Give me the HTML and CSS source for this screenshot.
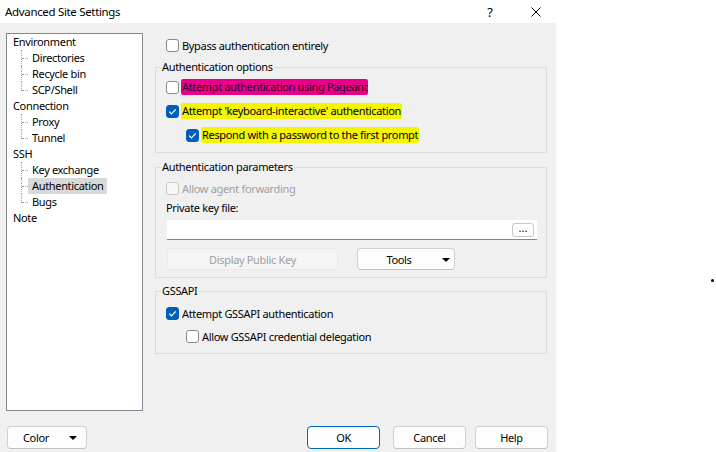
FILE: index.html
```html
<!DOCTYPE html>
<html lang="en">
<head>
    <meta charset="UTF-8">
    <title>Advanced Site Settings</title>
    <link rel="stylesheet" href="styles.css">
</head>
<body>

<div class="screen">
    <div class="dialog">
        <div class="titlebar">
            <span class="title">Advanced Site Settings</span>
            <span class="cap-help">?</span>
            <span class="cap-close">
                <svg width="10" height="10" viewBox="0 0 10 10"><path d="M0.5 0.5 L9.5 9.5 M9.5 0.5 L0.5 9.5" stroke="#000" stroke-width="1" fill="none"/></svg>
            </span>
        </div>

        <div class="client">
            <div class="main">
                <div class="tree">
                    <div class="node"><span>Environment</span></div>
                    <div class="leaf"><span>Directories</span></div>
                    <div class="leaf"><span>Recycle bin</span></div>
                    <div class="leaf last"><span>SCP/Shell</span></div>
                    <div class="node"><span>Connection</span></div>
                    <div class="leaf"><span>Proxy</span></div>
                    <div class="leaf last"><span>Tunnel</span></div>
                    <div class="node"><span>SSH</span></div>
                    <div class="leaf"><span>Key exchange</span></div>
                    <div class="leaf selected"><span>Authentication</span></div>
                    <div class="leaf last"><span>Bugs</span></div>
                    <div class="node"><span>Note</span></div>
                </div>

                <div class="pane">
                    <div class="check-row top">
                        <span class="box"></span>
                        <span>Bypass authentication entirely</span>
                    </div>

                    <fieldset class="group">
                        <legend>Authentication options</legend>
                        <div class="check-row">
                            <span class="box"></span>
                            <span class="mark pink">Attempt authentication using Pageant</span>
                        </div>
                        <div class="check-row">
                            <span class="box on"><svg width="11" height="11" viewBox="0 0 11 11"><path d="M2.2 5.7 L4.4 7.9 L8.8 3.3" stroke="#fff" stroke-width="1.2" fill="none"/></svg></span>
                            <span class="mark yellow">Attempt 'keyboard-interactive' authentication</span>
                        </div>
                        <div class="check-row sub">
                            <span class="box on"><svg width="11" height="11" viewBox="0 0 11 11"><path d="M2.2 5.7 L4.4 7.9 L8.8 3.3" stroke="#fff" stroke-width="1.2" fill="none"/></svg></span>
                            <span class="mark yellow">Respond with a password to the first prompt</span>
                        </div>
                    </fieldset>

                    <fieldset class="group params">
                        <legend>Authentication parameters</legend>
                        <div class="check-row disabled">
                            <span class="box"></span>
                            <span>Allow agent forwarding</span>
                        </div>
                        <div class="label">Private key file:</div>
                        <div class="keyfile">
                            <span class="browse">...</span>
                        </div>
                        <div class="key-buttons">
                            <span class="btn wide disabled">Display Public Key</span>
                            <span class="btn drop tools">Tools <i class="tri"></i></span>
                        </div>
                    </fieldset>

                    <fieldset class="group gss">
                        <legend>GSSAPI</legend>
                        <div class="check-row">
                            <span class="box on"><svg width="11" height="11" viewBox="0 0 11 11"><path d="M2.2 5.7 L4.4 7.9 L8.8 3.3" stroke="#fff" stroke-width="1.2" fill="none"/></svg></span>
                            <span>Attempt GSSAPI authentication</span>
                        </div>
                        <div class="check-row sub short">
                            <span class="box"></span>
                            <span>Allow GSSAPI credential delegation</span>
                        </div>
                    </fieldset>
                </div>
            </div>

            <div class="footer">
                <span class="btn drop color">Color <i class="tri"></i></span>
                <span class="spacer"></span>
                <span class="btn ok">OK</span>
                <span class="btn cancel">Cancel</span>
                <span class="btn help">Help</span>
            </div>
        </div>
    </div>

    <div class="outside">
        <span class="dot"></span>
    </div>
</div>

</body>
</html>
```

FILE: styles.css
```css
* {
    box-sizing: border-box;
}
body {
    margin: 0;
    background-color: #fff;
    font-family: "Noto Sans", sans-serif;
    font-size: 11px;
    letter-spacing: -0.33px;
    color: #000;
}
.screen {
    display: flex;
    width: 716px;
    height: 452px;
}
.dialog {
    width: 556px;
    height: 452px;
    display: flex;
    flex-direction: column;
}
.titlebar {
    height: 23px;
    display: flex;
    align-items: center;
    padding-left: 5px;
    background-color: #fff;
    font-size: 11.5px;
}
.title {
    flex: 1;
}
.cap-help {
    width: 52px;
    text-align: center;
    font-size: 13px;
}
.cap-close {
    width: 40px;
    display: flex;
    justify-content: center;
}
.client {
    flex: 1;
    display: flex;
    flex-direction: column;
    background-color: #f0f0f0;
    padding: 10px 9px 3px 6px;
}
.main {
    display: flex;
    gap: 12px;
    height: 378px;
}

/* tree */
.tree {
    width: 137px;
    background-color: #fff;
    border: 1px solid #828790;
}
.node, .leaf {
    position: relative;
    height: 16px;
    line-height: 16px;
    white-space: nowrap;
}
.node {
    padding-left: 3px;
}
.node span {
    padding: 0 3px;
}
.leaf {
    padding-left: 21px;
}
.leaf span {
    display: inline-block;
    height: 16px;
    padding: 0 4px;
}
.leaf.selected span {
    background-color: #d9d9d9;
    padding-right: 3px;
}
.leaf::before {
    content: "";
    position: absolute;
    left: 14px;
    top: 0;
    height: 16px;
    border-left: 1px dotted #a0a0a0;
}
.leaf.last::before {
    height: 9px;
}
.leaf::after {
    content: "";
    position: absolute;
    left: 15px;
    top: 8px;
    width: 6px;
    border-top: 1px dotted #a0a0a0;
}

/* right pane */
.pane {
    flex: 1;
}
.check-row {
    display: flex;
    align-items: center;
    height: 24px;
    white-space: nowrap;
}
.check-row.top {
    padding-left: 11px;
}
.check-row.sub {
    padding-left: 20px;
}
.check-row.short {
    height: 23px;
}
.box {
    width: 13px;
    height: 13px;
    flex: none;
    display: flex;
    align-items: center;
    justify-content: center;
    margin-right: 3px;
    border: 1px solid #8a8a8a;
    border-radius: 3px;
    background-color: #fff;
}
.box.on {
    border-color: #005fb8;
    background-color: #005fb8;
}
.check-row.disabled {
    color: #a0a0a0;
}
.check-row.disabled .box {
    border-color: #c8c8c8;
    background-color: #f7f7f7;
}
.mark {
    height: 16px;
    line-height: 16px;
    padding: 0 1px;
    margin-left: -1px;
    border-radius: 2px;
}
.pink {
    background-color: #e8008a;
    color: #2a0018;
}
.yellow {
    background-color: #f5f500;
}
.group {
    margin: 2px 0 0 0;
    padding: 0 9px 5px 10px;
    border: 1px solid #dcdcdc;
    min-width: 0;
}
.group legend {
    padding: 0 1px;
    margin-left: -5px;
    line-height: 16px;
}
.params {
    margin-top: 6px;
    padding-top: 1px;
    padding-bottom: 7px;
}
.gss {
    margin-top: 5px;
    padding-top: 2px;
}
.label {
    height: 16px;
    line-height: 16px;
}
.keyfile {
    height: 20px;
    margin: 4px 0 0 1px;
    display: flex;
    align-items: center;
    justify-content: flex-end;
    padding-right: 3px;
    background-color: #fff;
    border-bottom: 1px solid #868686;
}
.browse {
    width: 22px;
    height: 14px;
    line-height: 8px;
    text-align: center;
    font-size: 11px;
    letter-spacing: 0;
    border: 1px solid #c8c8c8;
    border-radius: 3px;
    background-color: #fdfdfd;
}
.key-buttons {
    display: flex;
    gap: 19px;
    margin: 8px 0 0 1px;
}
.btn {
    height: 23px;
    display: flex;
    align-items: center;
    justify-content: center;
    background-color: #fdfdfd;
    border: 1px solid #d0d0d0;
    border-bottom-color: #c0c0c0;
    border-radius: 4px;
}
.btn.wide {
    width: 171px;
    height: 22px;
}
.btn.disabled {
    color: #a0a0a0;
    background-color: #f5f5f5;
    border-color: #e8e8e8;
}
.btn.drop {
    position: relative;
}
.tri {
    position: absolute;
    top: 9px;
    width: 0;
    height: 0;
    border-left: 4px solid transparent;
    border-right: 4px solid transparent;
    border-top: 4px solid #000;
}
.tools {
    width: 98px;
    height: 22px;
    padding-right: 14px;
}
.tools .tri {
    right: 4px;
}
.footer {
    margin-top: auto;
    display: flex;
    margin-right: -1px;
}
.spacer {
    flex: 1;
}
.color {
    width: 80px;
    margin-left: 1px;
    padding-right: 22px;
}
.color .tri {
    right: 9px;
}
.ok, .cancel, .help {
    width: 73px;
}
.ok {
    border: 1px solid #0067c0;
}
.cancel {
    margin-left: 13px;
}
.help {
    margin-left: 9px;
}
.outside {
    flex: 1;
    padding: 279px 0 0 155px;
}
.dot {
    display: block;
    width: 3px;
    height: 3px;
    border-radius: 50%;
    background-color: #000;
}
```
